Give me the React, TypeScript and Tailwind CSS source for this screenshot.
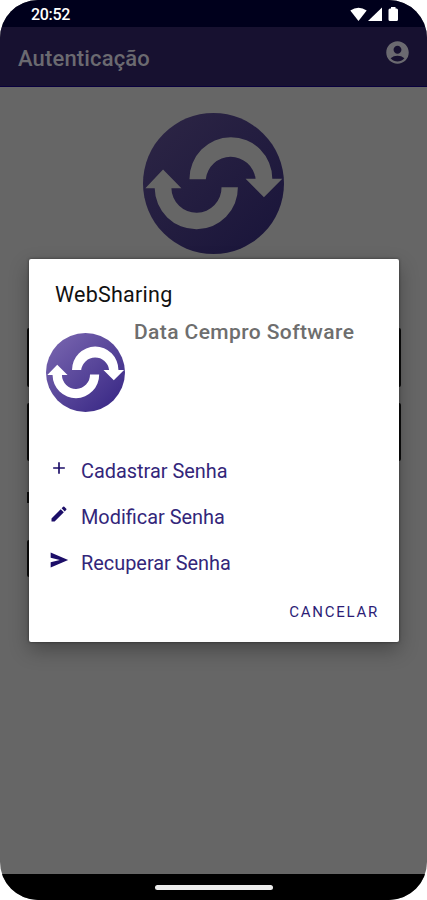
import React from "react";
import { MdAccountCircle, MdAdd, MdEdit } from "react-icons/md";

function Logo({ className, dimmed }: { className: string; dimmed?: boolean }) {
  const id = dimmed ? "logo-dimmed" : "logo-bright";
  const arrow = dimmed ? "#666666" : "#ffffff";
  return (
    <svg viewBox="41 40 422 422" className={className} aria-hidden="true">
      <defs>
        <linearGradient id={id} x1="0.1" y1="0.1" x2="0.85" y2="0.9">
          <stop offset="0" stopColor={dimmed ? "#2b2444" : "#7562ad"} />
          <stop offset="1" stopColor={dimmed ? "#1b163b" : "#3d2c88"} />
        </linearGradient>
      </defs>
      <circle cx="252" cy="251" r="211" fill={`url(#${id})`} />
      <path
        fill={arrow}
        d="M180 238A124 125 0 0 1 428 237H458L403 292L348 237H378A75 75 0 0 0 229 238Z"
      />
      <path
        fill={arrow}
        d="M325 262A124 124 0 0 1 76 265H48L101 209L156 265H126A75 75 0 0 0 276 262Z"
      />
    </svg>
  );
}

function StatusIcons() {
  return (
    <svg width="50" height="16" viewBox="0 0 50 16" fill="#fff" aria-hidden="true">
      <path d="M0.3 3.5Q8.5 -2 16.7 3.5L8.5 14Z" />
      <path d="M32 0.5V14H18Z" />
      <path d="M38.5 3Q38.5 1.5 40 1.5H41V0H45.500V1.5H46.500Q48 1.500 48 3V12.500Q48 14 46.500 14H40Q38.500 14 38.500 12.500Z" />
    </svg>
  );
}

function SendIcon({ className }: { className?: string }) {
  return (
    <svg viewBox="0 0 24 24" className={className} fill="currentColor" aria-hidden="true">
      <path d="M2 21L23 12L2 3V9.200L13 12L2 14.800Z" />
    </svg>
  );
}

const actions = [
  { label: "Cadastrar Senha", Icon: MdAdd },
  { label: "Modificar Senha", Icon: MdEdit },
  { label: "Recuperar Senha", Icon: SendIcon },
];

export default function App() {
  return (
    <div className="h-[900px] w-[427px] overflow-hidden bg-white font-[Roboto,sans-serif]">
      <div className="relative flex h-full flex-col overflow-hidden rounded-[38px] bg-[#666666]">
        <div className="flex h-[27px] shrink-0 items-start justify-between bg-[#00001c] pl-[31px] pr-[27px]">
          <span className="mt-[5px] text-[16px] font-medium leading-5 tracking-[-0.3px] text-white">20:52</span>
          <div className="mt-[7px]">
            <StatusIcons />
          </div>
        </div>
        <header className="flex h-[60px] shrink-0 items-start justify-between border-b border-[#09003d] bg-[#171130] pl-[18px] pr-[16px] text-[#6b6a70]">
          <h1 className="mt-[18px] text-[22px] font-medium leading-7 tracking-[0.15px]">Autenticação</h1>
          <MdAccountCircle className="mt-[12px] size-[27px]" />
        </header>
        <main className="flex flex-1 flex-col items-center">
          <Logo dimmed className="mt-[26px] size-[141px] shrink-0" />
          <div className="mt-[74px] flex w-[374px] flex-col items-start">
            <div className="h-[59px] w-full rounded-[2px] bg-[#0c0c0c]" />
            <div className="mt-4 h-[58px] w-full rounded-[2px] bg-[#0c0c0c]" />
            <div className="mt-[31px] h-[11px] w-[11px] bg-[#0c0c0c]" />
            <div className="mt-[37px] h-[37px] w-[160px] rounded-[2px] bg-[#0c0c0c]" />
          </div>
        </main>
        <footer className="flex h-[26px] shrink-0 items-center justify-center bg-black">
          <div className="h-[5px] w-[118px] rounded-full bg-[#ececec]" />
        </footer>

        <div
          role="dialog"
          className="absolute left-[29px] top-[259px] flex h-[383px] w-[370px] flex-col rounded-[2px] bg-white shadow-[0_8px_20px_rgba(0,0,0,0.3),0_0_3px_rgba(0,0,0,0.5)]"
        >
          <h2 className="ml-[26px] mt-[22px] text-[21.5px] leading-7 tracking-[0.25px] text-[#111111]">WebSharing</h2>
          <div className="ml-[17px] mt-[11px] flex h-[104px] items-start">
            <Logo className="mt-[13px] size-[79px]" />
            <p className="ml-[9px] whitespace-nowrap text-[21px] font-medium leading-6 tracking-[0.4px] text-[#6e6e6e]">
              Data Cempro Software
            </p>
          </div>
          <ul className="ml-[20px] mt-[26px] flex flex-col text-[#1c0e68]">
            {actions.map(({ label, Icon }) => (
              <li key={label} className="flex h-[46px] items-start">
                <Icon className="mt-[8px] size-[20px]" />
                <span className="ml-[12px] mt-[10px] text-[19.9px] leading-6 text-[#33267a]">{label}</span>
              </li>
            ))}
          </ul>
          <button className="mr-[20px] mt-[14px] self-end text-[15px] leading-5 tracking-[1.75px] text-[#2c1d76]">
            CANCELAR
          </button>
        </div>
      </div>
    </div>
  );
}
